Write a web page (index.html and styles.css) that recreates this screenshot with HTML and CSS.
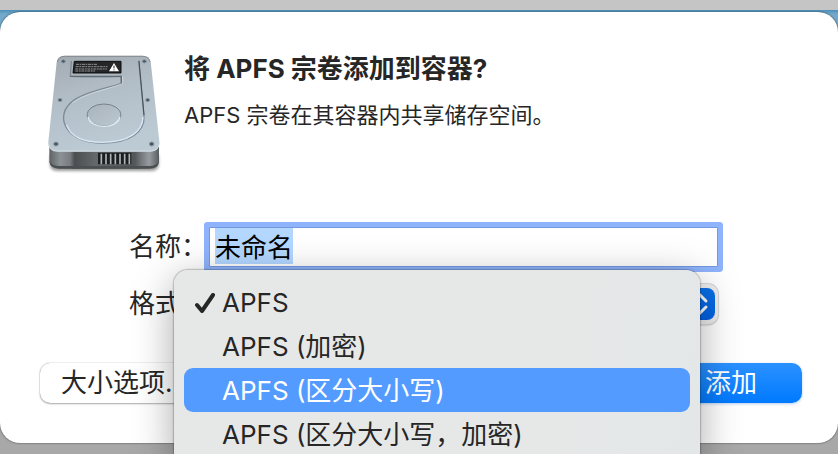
FILE: index.html
```html
<!DOCTYPE html>
<html lang="zh-CN">
<head>
<meta charset="utf-8">
<meta name="viewport" content="width=device-width, initial-scale=1">
<title>APFS</title>
<link rel="stylesheet" href="styles.css">
</head>
<body>
<main class="sheet">
  <header class="intro">
    <svg class="drive" viewBox="0 0 390 405" aria-hidden="true">
      <defs>
        <linearGradient id="plate" x1="0" y1="0" x2="0.3" y2="1">
          <stop offset="0" stop-color="#a3aab1"/>
          <stop offset="0.5" stop-color="#b3bfc8"/>
          <stop offset="1" stop-color="#bccad4"/>
        </linearGradient>
        <linearGradient id="base" x1="0" y1="0" x2="1" y2="0">
          <stop offset="0" stop-color="#5d6265"/>
          <stop offset="0.1" stop-color="#8b9194"/>
          <stop offset="0.19" stop-color="#777d80"/>
          <stop offset="0.23" stop-color="#4a4e50"/>
          <stop offset="0.42" stop-color="#63686b"/>
          <stop offset="0.78" stop-color="#53575a"/>
          <stop offset="0.84" stop-color="#747a7d"/>
          <stop offset="0.91" stop-color="#969c9f"/>
          <stop offset="1" stop-color="#575c5f"/>
        </linearGradient>
        <linearGradient id="hub" x1="0" y1="0" x2="1" y2="1">
          <stop offset="0" stop-color="#a8b3bc"/>
          <stop offset="1" stop-color="#bcc8d1"/>
        </linearGradient>
        <filter id="soft" x="-10%" y="-10%" width="120%" height="125%"><feGaussianBlur stdDeviation="4"/></filter>
      </defs>
      <path d="M30 330H356V362Q354 378 330 378H56Q32 378 30 362Z" fill="#000" opacity=".4" filter="url(#soft)"/>
      <path d="M28 305H357V350Q356 370 328 371H57Q30 370 28 350Z" fill="url(#base)"/>
      <path d="M29 349Q34 363 58 363H328Q350 363 356 349V352Q354 371 328 371H57Q32 370 29 352Z" fill="#4a4f52"/>
      <path d="M174 323H274V358H174Z" fill="#1b1e20"/>
      <path d="M184 326V358M198 326V358M212 326V358M226 326V358M240 326V358M254 326V358M268 326V358" stroke="#aeb3b4" stroke-width="5"/>
      <path d="M73 32H308Q328 32 332 50L358 288Q360 320 332 320H52Q24 320 25 290L50 52Q53 33 73 32Z" fill="url(#plate)"/>
      <path d="M25 292Q26 317 52 318H332Q357 317 358 292" fill="none" stroke="#d3dce1" stroke-width="3"/>
      <path d="M52 51Q56 34 74 34H308Q326 34 330 51" fill="none" stroke="#858b90" stroke-width="3"/>
      <path d="M94 48 91 94Q168 97 243 94L245 115C190 133 126 143 91 174C45 218 77 293 187 294C270 294 315 260 312 212L296 47" fill="none" stroke="#7d8a97" stroke-width="4"/>
      <path d="M80 240C94 280 136 292 187 292C267 292 308 260 309 216" fill="none" stroke="#d9e8f5" stroke-width="4"/>
      <path d="M248 94V116C194 136 135 144 97 174" fill="none" stroke="#dce3e8" stroke-width="2"/>
      <path d="M297 48 312 210" fill="none" stroke="#414c58" stroke-width="3"/>
      <path d="M91 94H244V115" fill="none" stroke="#626a72" stroke-width="4"/>
      <ellipse cx="192" cy="210" rx="51" ry="33" fill="url(#hub)" stroke="#76828d" stroke-width="3"/>
      <path d="M144 216C152 253 230 254 240 216" fill="none" stroke="#e4edf4" stroke-width="4"/>
      <path d="M103 49H243V84H99Z" fill="#252627" stroke="#0d0e0f" stroke-width="3"/>
      <path d="M108 58H172M107 65H203M106 72H201M106 78H165" stroke="#8f9192" stroke-width="3" stroke-dasharray="9 2 5 2"/>
      <path d="M222 54 237 79H207Z" fill="#fff"/>
      <path d="M222 62V70M222 73V76" stroke="#222" stroke-width="3"/>
      <g fill="#485663" stroke="#8e9ba5" stroke-width="3">
        <ellipse cx="70" cy="49" rx="6" ry="5"/><ellipse cx="313" cy="49" rx="6" ry="5"/>
        <ellipse cx="60" cy="165" rx="6" ry="5"/><ellipse cx="323" cy="165" rx="6" ry="5"/>
        <ellipse cx="48" cy="297" rx="7" ry="6"/><ellipse cx="335" cy="297" rx="7" ry="6"/>
      </g>
    </svg>
    <div class="copy">
      <h1>将 APFS 宗卷添加到容器?</h1>
      <p>APFS 宗卷在其容器内共享储存空间。</p>
    </div>
  </header>

  <form class="form">
    <div class="row">
      <label for="name">名称：</label>
      <input id="name" class="field" type="text" value="未命名" autocomplete="off" spellcheck="false">
    </div>
    <div class="row">
      <label for="format">格式：</label>
      <div class="popup">
        <select id="format">
          <option>APFS</option>
          <option>APFS (加密)</option>
          <option>APFS (区分大小写)</option>
          <option>APFS (区分大小写，加密)</option>
        </select>
        <svg class="stepper" viewBox="0 0 32 32" aria-hidden="true">
          <path d="M9 13 16 6 23 13M9 19 16 26 23 19"/>
        </svg>
        <div class="menu" role="menu">
          <button type="button" class="item" role="menuitemradio" aria-checked="true">
            <svg class="check" viewBox="0 0 20 20" aria-hidden="true"><path d="M2 12 7 18 18 2"/></svg>APFS
          </button>
          <button type="button" class="item" role="menuitemradio" aria-checked="false">APFS (加密)</button>
          <button type="button" class="item active" role="menuitemradio" aria-checked="false">APFS (区分大小写)</button>
          <button type="button" class="item" role="menuitemradio" aria-checked="false">APFS (区分大小写，加密)</button>
        </div>
      </div>
    </div>
    <footer class="actions">
      <button type="button" class="button">大小选项...</button>
      <button type="submit" class="button primary">添加</button>
    </footer>
  </form>
</main>
<script src="main.js"></script>
</body>
</html>
```

FILE: styles.css
```css
* { box-sizing: border-box; }

html, body { height: 100%; }

body {
  margin: 0;
  padding-top: 12px;
  overflow: hidden;
  color: #262626;
  font: 26px/32px Inter, "Noto Sans CJK SC", sans-serif;
  background: linear-gradient(#c5c5c5 0 10px, #4d8db7 10px, #73a9cc 14px 60px, #a8a8a8 60px);
}

button, input, select { font: inherit; color: inherit; }

.sheet {
  padding: 33px 36px 40px 40px;
  background: #fff;
  border-radius: 20px;
  box-shadow: 0 0 2px rgba(0, 0, 0, .7);
}

.intro {
  display: flex;
  gap: 14px;
}

.drive {
  width: 130px;
  height: 135px;
  flex: none;
}

.copy { padding-top: 8px; }

h1, p { margin: 0; }

h1 {
  font-size: 26px;
  line-height: 32px;
  font-weight: 700;
}

p {
  margin-top: 14px;
  font-size: 22px;
  line-height: 32px;
}

.form {
  display: grid;
  gap: 17px;
  margin-top: 47px;
}

.row {
  display: grid;
  grid-template-columns: 78px 1fr;
  gap: 2px;
  align-items: center;
  margin-left: 89px;
  margin-right: 84px;
}

label { white-space: nowrap; }

.field {
  width: 100%;
  height: 40px;
  padding: 0 5px 4px;
  border: 1px solid #7398de;
  outline: 0;
  background: #fff;
  color: #000;
  box-shadow: 0 0 0 5px #8fb4fc;
  border-radius: 1px;
}

.field::selection { background: #b3d7ff; color: #000; }

.popup {
  position: relative;
  height: 40px;
}

.popup select {
  width: 100%;
  height: 40px;
  padding: 0 40px 0 10px;
  appearance: none;
  border: 0;
  border-radius: 10px;
  background: #efeff1;
  box-shadow: 0 0 0 1px #d8d8da, 0 1px 2px rgba(0, 0, 0, .4);
}

.stepper {
  position: absolute;
  top: 4px;
  right: 3px;
  width: 32px;
  height: 32px;
  border-radius: 8px;
  background: linear-gradient(#0a70e8, #0062e4);
}

.stepper path, .check path {
  fill: none;
  stroke-linecap: round;
  stroke-linejoin: round;
  stroke-width: 3;
}

.stepper path { stroke: #fff; }

.menu {
  position: absolute;
  top: -14px;
  left: -35px;
  right: 18px;
  padding: 10px;
  border-radius: 14px;
  background: linear-gradient(100deg, #e6e8e8 75%, #e3e7e8);
  box-shadow: 0 0 2px rgba(0, 0, 0, .7), 0 10px 40px rgba(0, 0, 0, .35);
}

.item {
  position: relative;
  display: block;
  width: 100%;
  height: 44px;
  padding: 2px 10px 0 38px;
  border: 0;
  border-radius: 9px;
  background: none;
  text-align: left;
  white-space: nowrap;
}

.item.active {
  background: #539bff;
  color: #fff;
}

.check {
  position: absolute;
  top: 13px;
  left: 11px;
  width: 20px;
  height: 20px;
}

.check path { stroke: #262626; stroke-width: 4; }

.actions {
  display: flex;
  justify-content: space-between;
  margin-top: 22px;
}

.button {
  height: 40px;
  padding: 0 21px;
  border: 0;
  border-radius: 10px;
  background: #fff;
  box-shadow: 0 0 1px rgba(0, 0, 0, .5), 0 1px 2px rgba(0, 0, 0, .3);
}

.button.primary {
  width: 142px;
  color: #fff;
  background: linear-gradient(#2b91ff, #007aff);
  box-shadow: 0 1px 3px rgba(0, 90, 200, .3);
}
```

FILE: main.js
```js
const nameField = document.getElementById("name");
nameField.focus();
nameField.select();
```
